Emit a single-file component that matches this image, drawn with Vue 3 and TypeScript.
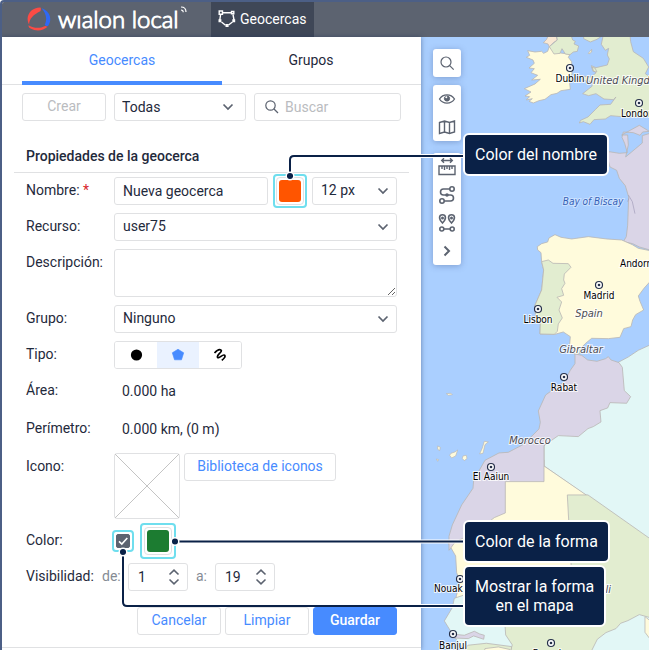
<script setup lang="ts">
import { ref } from 'vue'

interface Place { name: string; x: number; y: number; anchor: 'start' | 'middle'; dot?: [number, number]; kind: 'city' | 'country' | 'sea' }

const places: Place[] = [
  { name: 'Dublin', x: 570, y: 82, anchor: 'middle', dot: [570, 68], kind: 'city' },
  { name: 'London', x: 621, y: 117, anchor: 'start', dot: [639, 103], kind: 'city' },
  { name: 'United Kingdom', x: 586, y: 84, anchor: 'start', kind: 'country' },
  { name: 'Bay of Biscay', x: 593, y: 205, anchor: 'middle', kind: 'sea' },
  { name: 'Andorra', x: 620, y: 267, anchor: 'start', kind: 'city' },
  { name: 'Madrid', x: 599, y: 299, anchor: 'middle', dot: [599, 285], kind: 'city' },
  { name: 'Spain', x: 589, y: 317, anchor: 'middle', kind: 'country' },
  { name: 'Lisbon', x: 538, y: 323, anchor: 'middle', dot: [538, 309], kind: 'city' },
  { name: 'Gibraltar', x: 581, y: 353, anchor: 'middle', kind: 'country' },
  { name: 'Rabat', x: 564, y: 391, anchor: 'middle', dot: [564, 377], kind: 'city' },
  { name: 'Morocco', x: 530, y: 444, anchor: 'middle', kind: 'country' },
  { name: 'El Aaiun', x: 491, y: 480, anchor: 'middle', dot: [491, 467], kind: 'city' },
  { name: 'Nouakchott', x: 434, y: 592, anchor: 'start', dot: [460, 579], kind: 'city' },
  { name: 'Mali', x: 601, y: 593, anchor: 'middle', kind: 'country' },
  { name: 'Banjul', x: 453, y: 649, anchor: 'middle', dot: [453, 634], kind: 'city' },
  { name: 'Bamako', x: 551, y: 657, anchor: 'middle', dot: [551, 643], kind: 'city' },
]

const name = ref('Nueva geocerca')
const search = ref('')
const description = ref('')
const shape = ref('polygon')
const showShape = ref(true)
const zoomFrom = ref(1)
const zoomTo = ref(19)
</script>

<template>
  <div class="app">
    <header class="topbar">
      <a class="brand" href="#" aria-label="wialon local">
        <svg class="brand-mark" viewBox="0 0 24 24" fill="none">
          <path d="M13.500 .4C6 .2 .8 5.500 .6 11.500c0 2.200 .5 4.300 1.500 6C2.200 11.500 6.500 7.500 13.300 4.200c.8-1.300 .8-2.600 .2-3.800z" fill="#fb4b45" />
          <path d="M14.600 1.200c5.800 2 9.300 6.500 8.600 12.300-.3 2-1 3.800-2 5.200-1.400 .6-2.700 .1-3.400-1C20.300 12.500 19.500 7 14.600 1.200z" fill="#2f68f5" />
          <path d="M1.600 18.200c-.2 1.600 .5 2.600 2 3.400 5.500 3 12.500 2.400 17-1.800l-2.400-.9C12.500 21.600 7.500 21.400 1.600 18.200z" fill="#fb4b45" />
        </svg>
        <span class="brand-name">wıalon local</span>
        <svg class="brand-wave" viewBox="0 0 6 8" fill="none" stroke="#fff" stroke-width="1.200">
          <path d="M0 1c3 0 5 2 5 5M0 4c1.500 0 2.200.8 2.200 2.200" />
        </svg>
      </a>
      <a class="module" href="#">
        <svg width="18" height="18" viewBox="0 0 18 18" fill="none" stroke="#fff" stroke-width="1.400">
          <path d="M4.500 2.700H13M15 4.500l1 5.500M14.500 12l-4 3M7.500 15.200l-4-3.200M1.800 10l.8-5.500" />
          <path d="M1.200 1h3.300v3.300H1.200zM13.500 1.500h2.300v2.300h-2.300zM15 10h1.500v1.500H15zM8.200 14.700h1.700v1.700H8.200zM1.200 10h1.500v1.500H1.200z" />
        </svg>
        Geocercas
      </a>
    </header>

    <div class="workspace">
      <main class="panel">
        <nav class="tabs">
          <button class="tab active" type="button">Geocercas</button>
          <button class="tab" type="button">Grupos</button>
        </nav>
        <div class="filters">
          <button class="btn muted" type="button">Crear</button>
          <div class="select">
            <select aria-label="Filtro"><option>Todas</option></select>
            <svg viewBox="0 0 12 8"><path d="M1.500 1.500L6 6l4.500-4.500" /></svg>
          </div>
          <label class="search">
            <svg width="14" height="14" viewBox="0 0 14 14"><circle cx="5.500" cy="5.500" r="4.700" /><path d="M9 9l4 4" /></svg>
            <input v-model="search" type="text" placeholder="Buscar" aria-label="Buscar" />
          </label>
        </div>

        <form class="form" @submit.prevent>
          <h2>Propiedades de la geocerca</h2>
          <div class="fields">
            <label for="name">Nombre: <em>*</em></label>
            <div class="row">
              <input id="name" v-model="name" class="box name" type="text" />
              <button class="swatch orange" type="button" aria-label="Color del nombre"><i></i></button>
              <div class="select size">
                <select aria-label="Tamaño"><option>12 px</option></select>
                <svg viewBox="0 0 12 8"><path d="M1.500 1.500L6 6l4.500-4.500" /></svg>
              </div>
            </div>

            <label for="resource">Recurso:</label>
            <div class="select">
              <select id="resource"><option>user75</option></select>
              <svg viewBox="0 0 12 8"><path d="M1.500 1.500L6 6l4.500-4.500" /></svg>
            </div>

            <label for="description">Descripción:</label>
            <textarea id="description" v-model="description" class="box"></textarea>

            <label for="group">Grupo:</label>
            <div class="select">
              <select id="group"><option>Ninguno</option></select>
              <svg viewBox="0 0 12 8"><path d="M1.500 1.500L6 6l4.500-4.500" /></svg>
            </div>

            <span class="label">Tipo:</span>
            <div class="segments">
              <button type="button" aria-label="Círculo" :class="{ on: shape === 'circle' }" @click="shape = 'circle'">
                <svg width="14" height="14" viewBox="0 0 14 14"><circle cx="7.500" cy="7" r="5.600" fill="#000" /></svg>
              </button>
              <button type="button" aria-label="Polígono" :class="{ on: shape === 'polygon' }" @click="shape = 'polygon'">
                <svg width="14" height="14" viewBox="0 0 14 14"><path d="M7 1.200l5.700 3.600-2.200 7h-7l-2.200-7z" fill="#478bff" stroke="#478bff" stroke-width=".6" stroke-linejoin="round" /></svg>
              </button>
              <button type="button" aria-label="Línea" :class="{ on: shape === 'line' }" @click="shape = 'line'">
                <svg width="14" height="14" viewBox="0 0 14 14" fill="none" stroke="#000" stroke-width="1.700"><path d="M1.500 5C3.500 2.800 6.500 1 8 2.200 9.800 3.700 3.300 7 4.500 9.200 5.800 11.400 9.800 5.600 11.500 7.200 12.900 8.600 11 10.600 8.800 12.400" /></svg>
              </button>
            </div>

            <span class="label tall">Área:</span>
            <output class="value">0.000 ha</output>
            <span class="label tall">Perímetro:</span>
            <output class="value">0.000 km, (0 m)</output>

            <span class="label">Icono:</span>
            <div class="row top">
              <div class="thumb">
                <svg viewBox="0 0 64 64" stroke="#c4c4c4" stroke-width="1"><path d="M0 0l64 64M64 0L0 64" /></svg>
              </div>
              <button class="btn library" type="button">Biblioteca de iconos</button>
            </div>

            <label for="show">Color:</label>
            <div class="row shape-color">
              <span class="check">
                <input id="show" v-model="showShape" type="checkbox" />
                <svg v-if="showShape" viewBox="0 0 14 14" fill="none" stroke="#fff" stroke-width="1.600"><path d="M3 7.300l2.800 2.700L11.300 4" /></svg>
              </span>
              <button class="swatch green" type="button" aria-label="Color de la forma"><i></i></button>
            </div>
          </div>

          <div class="visibility">
            <span class="vis-title">Visibilidad:</span>
            <label for="from">de:</label>
            <div class="spin">
              <input id="from" v-model="zoomFrom" type="number" min="1" max="19" />
              <svg viewBox="0 0 12 16"><path d="M1.500 5.500L6 1.200l4.500 4.300M1.500 10.500L6 14.800l4.500-4.300" /></svg>
            </div>
            <label class="to" for="to">a:</label>
            <div class="spin">
              <input id="to" v-model="zoomTo" type="number" min="1" max="19" />
              <svg viewBox="0 0 12 16"><path d="M1.500 5.500L6 1.200l4.500 4.300M1.500 10.500L6 14.800l4.500-4.300" /></svg>
            </div>
          </div>

          <div class="actions">
            <button class="btn" type="button">Cancelar</button>
            <button class="btn" type="button">Limpiar</button>
            <button class="btn primary" type="submit">Guardar</button>
          </div>
        </form>
      </main>

      <section class="map">
        <svg class="land" viewBox="421 37 228 613" preserveAspectRatio="xMinYMin slice">
          <g transform="translate(425 0) scale(.3333)" stroke="#b9b6b4" stroke-width="2.400" stroke-linejoin="round">
            <path fill="#fffbdc" d="M373 140L400 158 435 163 430 172 440 185 441 220 434 250 436 268 408 272 396 280 378 284 360 298 342 302 325 309 312 304 322 296 304 300 314 290 300 288 318 276 298 266 330 252 346 238 320 240 338 226 318 218 328 206 312 204 328 190 324 180 304 172 314 166 308 152 330 156 350 154 356 160 368 154z" />
            <path fill="#f9e8d4" d="M373 140l-4-8-14-4 10-10 4-10h24l4 12-12 8z" />
            <path fill="#e2edd0" d="M373 140l24-20-2-12h44l4 12 8 4-4 8 14 6-4 16-12 2-10 8-14-2-10-16-6 14-18 2zM476 100v16l20 10 20-8 12-8v-20z" />
            <path fill="#e2edd0" d="M535 105l-6 28 12 18 10-6-4 20 6 12-6 18-34 8-14-6 6 14 8 8-16 12-22-2-2 12 30 4-2 14-28 22 18 6 22-6 24 16 28 2 8-8-16 22-32 2-14 14-22 22-22 10-4 8 12-4 20 8 12-14 34-2 16-10 44 4 80-4V235l-20-14 10-20-16-26-30-20-8-30-2-20zM510 204l-10-2 4 12 12 2z" />
            <path fill="#fffbdc" d="M490 160l10-12v8l-8 6z" />
            <path fill="#dad5e7" d="M590 405h18l2 30-8 36 50-42v-22l23-7v350l-32-9-20-10-28-6 9-15 4-34 3-85-10-34-18-22-8-24-20-10-8-30 5-16 31 5 24-2-8-28-8-18 4-16 30 2 20 8 8-10 20-2-30-18z" />
            <path fill="none" stroke="#a9a5c0" d="M610 585l12 20 8 36M612 595l-4 10" />
            <path fill="#fffbdc" d="M590 720L622 734 640 745 675 752V845L657 865 640 888 645 904 656 930 632 944 623 960 618 980 596 986 585 1012 550 1016 500 1015 482 1030 466 1046 462 1062 447 1062 444 1046 434 1034 436 1010 415 996 390 1003 345 1002 346 970 332 954 330 916 350 870 356 810 350 785 348 758 338 750 337 740 350 731 368 726 372 714 390 704 408 712 440 717 490 710 545 717z" />
            <path fill="#e2edd0" d="M350 785L370 780 384 790 430 791 438 802 418 822 416 840 420 850 410 866 416 886 396 892 410 906 402 930 412 954 400 972 397 994 388 1003 345 1002 346 970 332 954 330 916 350 870 356 810z" />
            <path fill="#e2f7f6" d="M580 1087l30-16 30-20 35-16v585l-318-222v-60z" />
            <path fill="#fffbdc" d="M357 1380v18l131 90 20 340-420 10 6-50 11-40-10-30-3-50-22-38 60-80 110-120z" />
            <path fill="#dad5e7" d="M450 1062l20 4 18 14 28 4 26-8 8-6 8 10 24 8 10 14 6 70 19 18-12 20-50-2-7 16-23 8 3 34-23 14-16 6-29 24-60-3-43 30v108H241v94l-33 14-52 40-66 34-18 24v-42l10-34 28-60 34-50 2-24 34-60 42-22 28-2 46-24 46-46 4-20-6-34 22-48 56-40 18-34 14-20z" />
            <path fill="#e2edd0" d="M427 1485h62l186 131v250l-20 30-40 70H230l10-110 206-20z" />
            <path fill="#e2f7f6" d="M88 1795l30-10 122 90 2 30 20 30-4 12-140 4-34-46-26-42 24-40zM675 1853l-32-9-34 18-22 8-14 16-30 12-26 20-20 40 10 10h170z" />
            <path fill="#dad5e7" d="M78 1902l40 4 30-12 16 8 14 4-2 12-30-10-16 8-50-2z" />
            <path fill="#e2edd0" d="M128 1936l56-6 76 10-4 30H110z" />
            <path fill="#fffbdc" d="M180 1946l40-5 36 8 8 20h-90zM660 1850l15 12v55l-15-20z" />
            <g fill="#fffbdc" stroke-width="2">
              <path d="M64 1181l14-1 4 4-12 2zM38 1338l8 4-2 10-6-4zM78 1360l12-4 8-6-6 18-12 6-6-8zM114 1368l10-2 2 10-8 6-6-6zM164 1362l10-2 6-26 10-8-12-2-6 20zM34 1377l7 2-3 5z" />
            </g>
          </g>
          <g v-for="p in places" :key="p.name">
            <template v-if="p.dot">
              <circle :cx="p.dot[0]" :cy="p.dot[1]" r="3.500" fill="#fff" stroke="#26304a" stroke-width="1.200" />
              <circle :cx="p.dot[0]" :cy="p.dot[1]" r="1.300" fill="#26304a" />
            </template>
            <text :class="p.kind" :x="p.x" :y="p.y" :text-anchor="p.anchor">{{ p.name }}</text>
          </g>
        </svg>

        <div class="tools">
          <div class="tool-group">
            <button type="button" aria-label="Buscar en el mapa"><svg viewBox="0 0 20 20"><circle cx="9" cy="9" r="5" stroke-width="1.200" /><path d="M12.700 12.700l4 4" stroke-width="1.200" /></svg></button>
          </div>
          <div class="tool-group">
            <button type="button" aria-label="Visibilidad"><svg viewBox="0 0 20 20"><path d="M2.500 10C6 4.500 14 4.500 17.500 10 14 15.500 6 15.500 2.500 10z" stroke-width="1.300" /><circle cx="10" cy="9.500" r="2.600" fill="#5c6370" stroke-width="1" /><circle cx="9.300" cy="8.300" r="1" fill="#fff" stroke="none" /></svg></button>
            <button type="button" aria-label="Capas"><svg viewBox="0 0 20 20"><path d="M2.500 5.500L7.500 4l5 1.500 5-1.500v11l-5 1.500-5-1.500-5 1.500zM7.500 4v11M12.500 5.500v11" stroke-width="1.400" /></svg></button>
          </div>
          <div class="tool-group third">
            <button type="button" aria-label="Distancia"><svg viewBox="0 0 20 20"><path d="M5 3.500h10M7 1.200L4.700 3.500 7 5.800M13 1.200l2.300 2.300L13 5.800M2 9h16v8.500H2zM5 9v3M7.500 9v4M10 9v3M12.500 9v4M15 9v3" stroke-width="1.400" /></svg></button>
            <button type="button" aria-label="Ruta"><svg viewBox="0 0 20 20"><circle cx="15" cy="4" r="2.200" /><circle cx="5" cy="16" r="2.200" /><path d="M12.800 4H6.500a3 3 0 000 6h7a3 3 0 010 6H7.200" /><circle cx="10" cy="10" r="1" /></svg></button>
            <button type="button" aria-label="Puntos"><svg viewBox="0 0 20 20"><path d="M5.500 10C1 5.500 2.200 1.700 5.500 1.700S10 5.500 5.500 10zM14.500 10C10 5.500 11.200 1.700 14.500 1.700S19 5.500 14.500 10zM7 16h6" /><circle cx="5.500" cy="5" r=".7" /><circle cx="14.500" cy="5" r=".7" /><circle cx="4.800" cy="16" r="2" /><circle cx="15.200" cy="16" r="2" /></svg></button>
            <button type="button" aria-label="Más"><svg viewBox="0 0 20 20"><path d="M7.500 5.500L12 10l-4.500 4.500" stroke-width="2" /></svg></button>
          </div>
        </div>
      </section>
    </div>

    <div class="guide">
      <svg width="649" height="650" viewBox="0 0 649 650" fill="none">
        <g stroke="#fff" stroke-width="4">
          <path d="M421 156h44M421 541.500h44M421 606h44" />
        </g>
        <g stroke="#0a2147" stroke-width="2">
          <path d="M465 156H294q-4 0-4 4v16M465 541.500H175M465 606H127q-4 0-4-4v-50" />
        </g>
        <g fill="#0a2147" stroke="#fff" stroke-width="1.500">
          <circle cx="290" cy="176" r="3.800" /><circle cx="175" cy="541.500" r="3.800" /><circle cx="123" cy="552" r="3.800" />
        </g>
      </svg>
      <div class="callout name-color">Color del nombre</div>
      <div class="callout shape-fill">Color de la forma</div>
      <div class="callout map-show">Mostrar la forma<br />en el mapa</div>
    </div>
  </div>
</template>

<style>
body { margin: 0; background: #fff; }
</style>

<style scoped>
.app {
  position: relative;
  display: flex;
  flex-direction: column;
  box-sizing: border-box;
  height: 100vh;
  min-height: 650px;
  overflow: hidden;
  border: solid #4c5f86;
  border-width: 2px 0 0 2px;
  border-top-left-radius: 4px;
  font: 14px/18px Roboto, sans-serif;
  color: #1f2a3c;
}
.app * { box-sizing: border-box; }
button, input, select, textarea { font: inherit; color: inherit; margin: 0; }
button { padding: 0; cursor: pointer; }
a { color: #fff; text-decoration: none; }

.topbar { display: flex; flex: none; height: 35px; background: #5c6370; }
.brand { display: flex; align-items: center; width: 209px; padding: 0 0 2px 25px; }
.brand-mark { width: 24px; height: 24px; }
.brand-name { margin-left: 7px; font: 300 24px/28px Lato, sans-serif; -webkit-text-stroke: 1px #fff; white-space: nowrap; }
.brand-wave { align-self: flex-start; width: 6px; height: 8px; margin: 4px 0 0 2px; }
.module { display: flex; align-items: center; gap: 4px; padding: 0 8px 2px 7px; background: #3f4757; }

.workspace { display: grid; flex: 1; grid-template-columns: minmax(0, 419px) minmax(0, 1fr); min-height: 0; }
.panel { position: relative; z-index: 1; background: #fff; box-shadow: 0 0 5px rgba(30, 50, 90, .5); }
.tabs { display: flex; height: 48px; padding: 0 21px 0 20px; border-bottom: 1px solid #e0e1e3; }
.tab { flex: 1; height: 48px; padding-top: 2px; border: 0; border-bottom: 4px solid transparent; background: none; }
.tab.active { flex: 0 0 200px; border-color: #478bff; color: #478bff; }
.filters { display: grid; grid-template-columns: 84px 132px 1fr; gap: 8px; padding: 8px 20px 0; }

.btn { width: 84px; height: 28px; padding-bottom: 2px; border: 1px solid #e0e1e3; border-radius: 3px; background: #fff; color: #478bff; white-space: nowrap; }
.btn.muted { color: #babcc0; }
.btn.library { width: 152px; }
.btn.primary { border-color: #478bff; background: #478bff; color: #fff; font-weight: 500; }

.select { display: grid; height: 28px; }
.select select { grid-area: 1 / 1; width: 100%; padding: 0 28px 2px 8px; border: 1px solid #e0e1e3; border-radius: 3px; background: #fff; appearance: none; outline: 0; }
.filters .select select { padding: 0 28px 0 7px; }
.select svg { grid-area: 1 / 1; place-self: center end; width: 12px; height: 8px; margin-right: 8px; pointer-events: none; fill: none; stroke: #5c6370; stroke-width: 1.7; }
.filters .select svg { margin-right: 12px; }
.search { display: flex; align-items: center; gap: 6px; height: 28px; padding: 0 10px; border: 1px solid #e0e1e3; border-radius: 3px; }
.search svg { flex: none; fill: none; stroke: #5c6370; stroke-width: 1.2; }
.search input { width: 100%; min-width: 0; padding: 0; border: 0; outline: 0; }
.search input::placeholder { color: #babcc0; }

.form { padding: 26px 12px 12px; border-bottom: 1px solid #e0e1e3; }
h2 { margin: 0; padding: 0 12px 7px; border-bottom: 1px solid #e0e1e3; font: 500 14px/18px Roboto, sans-serif; }
.fields { display: grid; grid-template-columns: 88px minmax(0, 1fr); row-gap: 8px; padding: 4px 12px 0; }
.fields > label, .label { padding-top: 4px; }
.label.tall { height: 30px; }
.value { padding: 5px 0 0 8px; }
em { color: #d8262c; font-style: normal; }
.row { display: flex; gap: 8px; }
.row.top { align-items: flex-start; gap: 4px; }
.box { height: 28px; padding: 0 8px; border: 1px solid #e0e1e3; border-radius: 3px; background: #fff; outline: 0; }
.box.name { flex: 1; min-width: 0; }
textarea.box { display: block; width: 100%; height: 48px; padding: 4px 8px; resize: vertical; }
.select.size { width: 85px; }

.swatch { position: relative; display: grid; place-items: center; width: 28px; height: 28px; border: 1px solid #e0e1e3; border-radius: 4px; background: #fff; }
.swatch i { width: 22px; height: 22px; border-radius: 3px; }
.swatch::after, .check::after { content: ''; position: absolute; inset: -4px; border: 2px solid #6fdeee; border-radius: 4px; pointer-events: none; }
.orange i { background: #ff5500; }
.green i { background: #1c7c31; }
.green::after { inset: -5px; }
.shape-color { align-items: center; gap: 14px; padding-left: 2px; }
.check { position: relative; display: grid; width: 14px; height: 14px; }
.check input { grid-area: 1 / 1; width: 14px; height: 14px; border: 1px solid #5c6370; border-radius: 2px; appearance: none; }
.check input:checked { background: #5c6370; }
.check svg { grid-area: 1 / 1; pointer-events: none; }

.segments { display: flex; width: 128px; height: 28px; border: 1px solid #e0e1e3; border-radius: 3px; overflow: hidden; }
.segments button { display: grid; flex: 1; place-items: center; border: 0; background: #fff; }
.segments button.on { background: #eaf2ff; }
.thumb { width: 66px; height: 66px; border: 1px solid #e0e1e3; border-radius: 3px; }
.thumb svg { display: block; }

.visibility { display: flex; gap: 8px; padding: 8px 12px 0; }
.visibility label, .vis-title { padding-top: 4px; white-space: nowrap; }
.visibility label { width: 18px; color: #858b94; }
.vis-title { width: 68px; }
.visibility label.to { width: 11px; }
.spin { display: grid; width: 60px; height: 28px; }
.spin input { grid-area: 1 / 1; width: 100%; padding: 0 24px 0 9px; border: 1px solid #e0e1e3; border-radius: 3px; appearance: textfield; outline: 0; }
.spin input::-webkit-inner-spin-button { appearance: none; }
.spin svg { grid-area: 1 / 1; place-self: center end; width: 12px; height: 16px; margin-right: 8px; pointer-events: none; fill: none; stroke: #5c6370; stroke-width: 1.6; }
.actions { display: flex; justify-content: flex-end; gap: 4px; padding: 16px 12px 0; }

.map { display: grid; min-height: 0; background: #aacfff; overflow: hidden; }
.land { grid-area: 1 / 1; width: 100%; height: 100%; }
.land text { font: 10px "DejaVu Sans Condensed", "DejaVu Sans", sans-serif; fill: #000; stroke: #fff; stroke-width: 2px; stroke-opacity: .8; paint-order: stroke; }
.land text.country { font-size: 11px; font-style: italic; fill: #4c4c54; }
.land text.sea { font-style: italic; fill: #3560b5; stroke-opacity: .4; }
.tools { z-index: 1; grid-area: 1 / 1; display: flex; flex-direction: column; gap: 8px; align-self: start; justify-self: start; padding: 12px; }
.tool-group { width: 28px; border-radius: 3px; background: #fff; box-shadow: 0 1px 6px rgba(50, 70, 120, .35); }
.tool-group.third { margin-top: 4px; }
.tool-group button { display: grid; place-items: center; width: 28px; height: 28px; border: 0; background: none; }
.tool-group svg { width: 20px; height: 20px; fill: none; stroke: #5c6370; stroke-width: 1.6; }

.guide { position: absolute; z-index: 2; top: -2px; left: -2px; pointer-events: none; }
.guide svg { display: block; }
.callout { position: absolute; left: 463px; padding: 10px; border: 2px solid #fff; border-radius: 6px; background: #0a2147; color: #fff; font-size: 16px; line-height: 19px; text-align: center; white-space: nowrap; }
.name-color { top: 133px; }
.shape-fill { top: 520px; }
.map-show { top: 565px; }
</style>
